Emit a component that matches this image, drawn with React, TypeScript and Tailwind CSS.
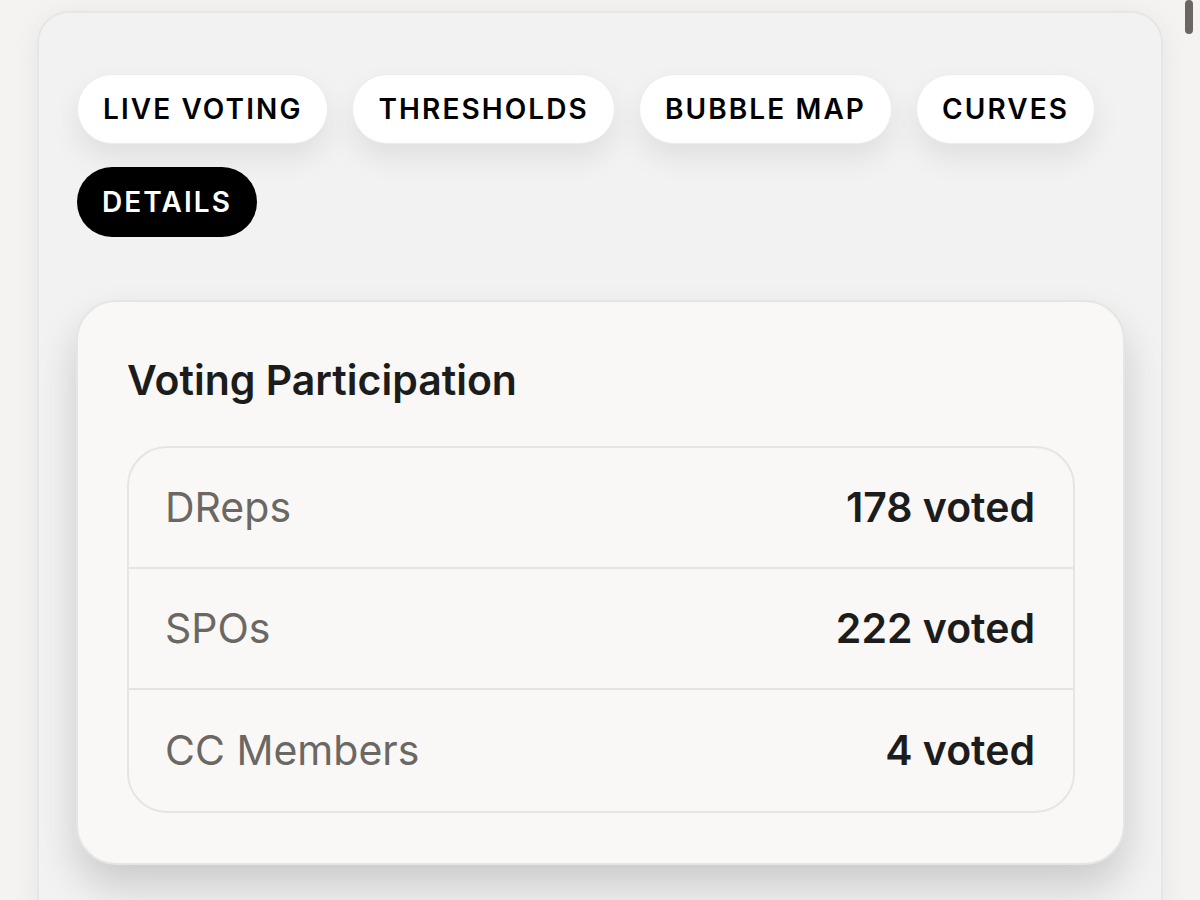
import React from "react";

const tabs = ["LIVE VOTING", "THRESHOLDS", "BUBBLE MAP", "CURVES", "DETAILS"];
const rows = [
  { label: "DReps", value: "178 voted" },
  { label: "SPOs", value: "222 voted" },
  { label: "CC Members", value: "4 voted" },
];

export default function App() {
  return (
    <div
      className="relative w-[1200px] h-[900px] overflow-hidden bg-[#f4f3f1]"
      style={{ fontFamily: "Inter, 'Noto Sans', sans-serif" }}
    >
      <div className="absolute right-[7px] top-0 h-[34px] w-[8px] rounded-full bg-[#6b6661]" />
      <div className="ml-[37px] mt-[11px] w-[1126px] h-[920px] rounded-[32px] border-2 border-[#e6e6e6] bg-[#f2f2f2] pl-[37px] pr-[36px] pt-[61px] shadow-[0_4px_30px_rgba(0,0,0,0.06)]">
        <div className="flex flex-wrap gap-x-[24px] gap-y-[23px] pl-[1px]">
          {tabs.map((t) => {
            const active = t === "DETAILS";
            return (
              <div
                key={t}
                className={
                  active
                    ? "h-[70px] px-[25px] flex items-center rounded-full bg-black text-white text-[28px] font-semibold tracking-[0.075em]"
                    : "h-[70px] px-[25px] flex items-center rounded-full bg-white text-black text-[28px] font-semibold tracking-[0.075em] border border-[#ececec] shadow-[0_14px_30px_rgba(0,0,0,0.08)]"
                }
              >
                {t}
              </div>
            );
          })}
        </div>
        <div className="mt-[63px] rounded-[40px] border-2 border-[#e6e5e3] bg-[#f9f8f6] pl-[49px] pr-[48px] pt-[54px] pb-[50px] shadow-[0_22px_40px_rgba(0,0,0,0.16)]">
          <div className="text-[41px] leading-[48px] font-semibold text-[#1c1c1c]">Voting Participation</div>
          <div className="mt-[42px] rounded-[40px] border-2 border-[#e6e5e3] bg-[#f9f8f6]">
            {rows.map((r, i) => (
              <div
                key={r.label}
                className={
                  i < rows.length - 1
                    ? "h-[121px] flex items-center justify-between pl-[36px] pr-[38px] border-b-2 border-[#e4e3e1]"
                    : "h-[121px] flex items-center justify-between pl-[36px] pr-[38px]"
                }
              >
                <span className="text-[41px] text-[#6b6863]">{r.label}</span>
                <span className="text-[41px] font-semibold text-[#1c1c1c]">{r.value}</span>
              </div>
            ))}
          </div>
        </div>
      </div>
    </div>
  );
}
